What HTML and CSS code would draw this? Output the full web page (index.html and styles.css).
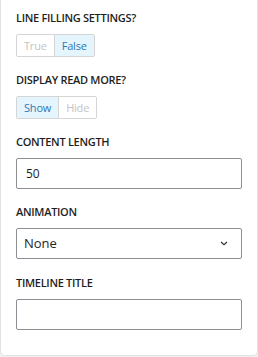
FILE: index.html
```html
<!DOCTYPE html>
<html>
<head>
<meta charset="utf-8">
<link rel="stylesheet" href="styles.css">
</head>
<body>
<div class="panel">
  <div class="field">
    <div class="label">LINE FILLING SETTINGS?</div>
    <div class="btn-group">
      <span class="btn">True</span>
      <span class="btn active">False</span>
    </div>
  </div>
  <div class="field">
    <div class="label">DISPLAY READ MORE?</div>
    <div class="btn-group">
      <span class="btn active">Show</span>
      <span class="btn">Hide</span>
    </div>
  </div>
  <div class="field">
    <div class="label">CONTENT LENGTH</div>
    <div class="input">50</div>
  </div>
  <div class="field">
    <div class="label">ANIMATION</div>
    <div class="input select">
      <span>None</span>
      <svg class="chev" width="8" height="5" viewBox="0 0 8 5"><path d="M1 1 L4 3.8 L7 1" fill="none" stroke="#333" stroke-width="1.2"/></svg>
    </div>
  </div>
  <div class="field">
    <div class="label">TIMELINE TITLE</div>
    <div class="input"></div>
  </div>
</div>
</body>
</html>
```
FILE: styles.css
```css
html, body {
  margin: 0;
  padding: 0;
  background: #f0f0f1;
}
body {
  width: 258px;
  height: 357px;
  font-family: "Open Sans", "Noto Sans", sans-serif;
  color: #1e1e1e;
}
.panel {
  box-sizing: border-box;
  width: 258px;
  height: 356px;
  background: #fff;
  border: 1px solid #e2e2e2;
  border-top: none;
  border-radius: 0 0 5px 5px;
  padding: 10px 15px 0 15px;
  display: flex;
  flex-direction: column;
  gap: 15px;
}
.field {
  display: flex;
  flex-direction: column;
  gap: 8px;
}
.field:last-child {
  margin-top: 1px;
}
.label {
  font-size: 11px;
  font-weight: 600;
  line-height: 16px;
  letter-spacing: -0.3px;
}
.btn-group {
  display: flex;
  align-self: flex-start;
  border: 1px solid #d5d5d5;
  border-radius: 2px;
}
.btn {
  font-size: 11px;
  line-height: 21px;
  padding: 0 7px;
  color: #c4c4c4;
  letter-spacing: -0.2px;
}
.btn + .btn {
  border-left: 1px solid #d5d5d5;
}
.btn.active {
  background: #e5f5fd;
  color: #2f78b4;
}
.input {
  box-sizing: border-box;
  height: 31px;
  width: 226px;
  border: 1px solid #8c8f94;
  border-radius: 2px;
  font-size: 12px;
  line-height: 29px;
  padding: 0 9px;
  color: #1e1e1e;
}
.select {
  display: flex;
  align-items: center;
  justify-content: space-between;
  padding: 0 13px 0 7px;
  font-size: 13px;
}
.chev {
  display: block;
}
```
